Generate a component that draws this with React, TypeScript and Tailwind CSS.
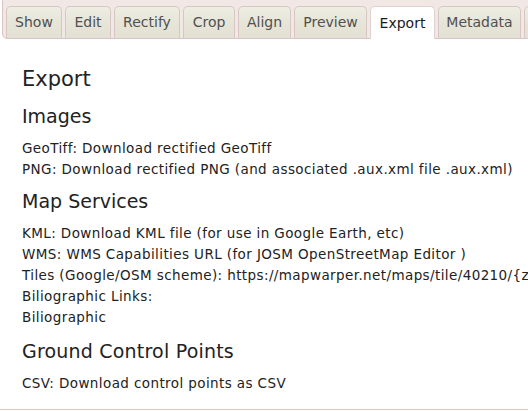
const tabs = [
  { label: 'Show', w: 'w-[56px]' },
  { label: 'Edit', w: 'w-[46px]' },
  { label: 'Rectify', w: 'w-[66px]' },
  { label: 'Crop', w: 'w-[52px]' },
  { label: 'Align', w: 'w-[53px]' },
  { label: 'Preview', w: 'w-[73px]' },
  { label: 'Export', w: 'w-[65px]', active: true },
  { label: 'Metadata', w: 'w-[83px]' },
  { label: 'Activity', w: 'w-[70px]' },
]

const Line = ({ children }: { children: React.ReactNode }) => (
  <p className="text-[13.5px] tracking-[0.4px] leading-[21px] text-[#222] whitespace-nowrap">{children}</p>
)

export default function App() {
  return (
    <div className="w-[528px] h-[411px] overflow-hidden bg-white font-['DejaVu_Sans',sans-serif]">
      <div className="w-[600px] h-[410px] flex flex-col border-b border-[#dccbbd]">
        {/* tab header */}
        <div className="ml-[2px] -mt-[4px] h-[43px] shrink-0 pt-[10px] pl-[3px] flex items-end gap-[3px] border border-[#d9c6c4] rounded-[5px] bg-[#f1e8e5]">
          {tabs.map((t) => (
            <div
              key={t.label}
              className={`${t.w} shrink-0 flex items-center justify-center rounded-t-[5px] border border-b-0 text-[14px] ${
                t.active
                  ? 'h-[33px] -mb-[1px] bg-white border-[#e0d2d0] text-[#1a1a1a]'
                  : 'h-[32px] bg-gradient-to-b from-[#eeede3] via-[#e6e5d8] to-[#e2e1d3] border-[#d8c6c4] text-[#505050]'
              }`}
            >
              {t.label}
            </div>
          ))}
        </div>

        {/* panel */}
        <div className="pl-[22px] pt-[26px] text-[#222]">
          <h1 className="text-[21px] leading-[28px]">Export</h1>

          <h2 className="mt-[11px] text-[19px] leading-[24px]">Images</h2>
          <div className="mt-[10px]">
            <Line>GeoTiff: Download rectified GeoTiff</Line>
            <Line>PNG: Download rectified PNG (and associated .aux.xml file .aux.xml)</Line>
          </div>

          <h2 className="mt-[9px] text-[19px] leading-[24px]">Map Services</h2>
          <div className="mt-[10px]">
            <Line>KML: Download KML file (for use in Google Earth, etc)</Line>
            <Line>WMS: WMS Capabilities URL (for JOSM OpenStreetMap Editor )</Line>
            <Line>Tiles (Google/OSM scheme): https://mapwarper.net/maps/tile/40210/{'{z}/{x}/{y}'}.png</Line>
            <Line>Biliographic Links:</Line>
            <Line>Biliographic</Line>
          </div>

          <h2 className="mt-[11px] text-[19px] leading-[24px] tracking-[0.2px]">Ground Control Points</h2>
          <div className="mt-[10px]">
            <Line>CSV: Download control points as CSV</Line>
          </div>
        </div>
      </div>
    </div>
  )
}
